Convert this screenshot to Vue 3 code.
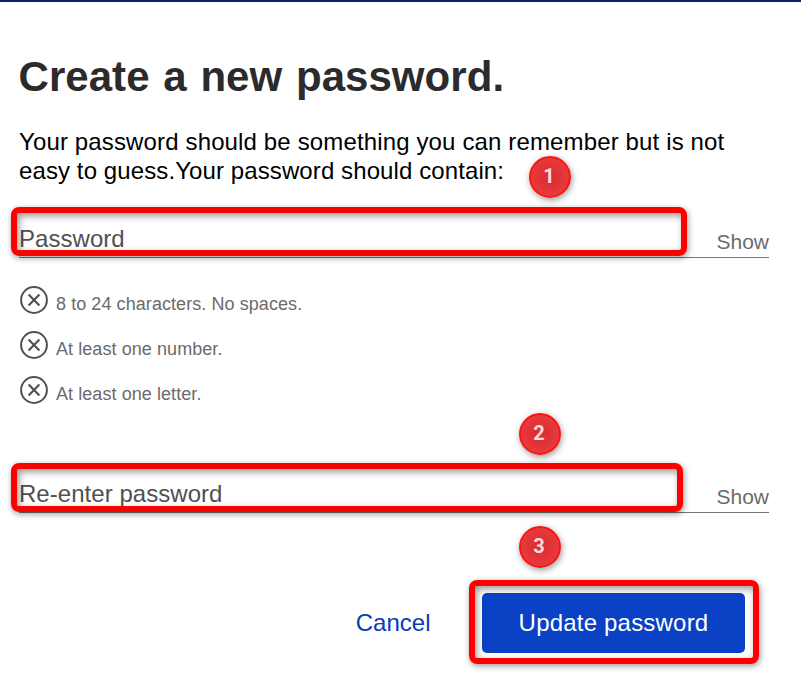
<script setup>
const rules = [
  '8 to 24 characters. No spaces.',
  'At least one number.',
  'At least one letter.',
]
</script>

<template>
  <main class="page">
    <h1 class="title">Create a new password.</h1>
    <p class="intro">
      Your password should be something you can remember but is not<br />easy to guess.Your password should contain:
    </p>

    <div class="field">
      <label class="label">Password</label>
      <span class="show">Show</span>
    </div>

    <ul class="rules">
      <li v-for="rule in rules" :key="rule" class="rule">
        <svg class="icon" viewBox="0 0 28 28" fill="none" stroke="#505050">
          <circle cx="14" cy="14" r="12.9" stroke-width="2" />
          <path d="M8.6 8.6L19.4 19.4M19.4 8.6L8.6 19.4" stroke-width="2.1" />
        </svg>
        <span class="rule-text">{{ rule }}</span>
      </li>
    </ul>

    <div class="field">
      <label class="label">Re-enter password</label>
      <span class="show">Show</span>
    </div>

    <div class="actions">
      <a class="cancel">Cancel</a>
      <button class="update" type="button">Update password</button>
    </div>

    <div class="mark mark-one"></div>
    <div class="mark mark-two"></div>
    <div class="mark mark-three"></div>
    <span class="badge badge-one">1</span>
    <span class="badge badge-two">2</span>
    <span class="badge badge-three">3</span>
  </main>
</template>

<style>
body {
  background: #fff;
}
</style>

<style scoped>
.page {
  position: relative;
  box-sizing: border-box;
  width: 801px;
  height: 673px;
  padding: 51px 32px 0 19px;
  border-top: 2px solid #0a1e73;
  overflow: hidden;
  background: #fff;
  font-family: "Liberation Sans", Arial, sans-serif;
  color: #000;
}
.title {
  margin: 0 0 0 -0.5px;
  font-size: 42px;
  line-height: 48px;
  font-weight: 700;
  letter-spacing: 0.05px;
  word-spacing: 2px;
  white-space: nowrap;
  color: #2b2b2b;
}
.intro {
  margin: 26px 0 0;
  font-size: 24px;
  line-height: 29px;
  letter-spacing: 0.1px;
  white-space: nowrap;
}
.intro::first-line {
  letter-spacing: 0.14px;
}
.field {
  display: flex;
  justify-content: space-between;
  align-items: flex-end;
  box-sizing: border-box;
  height: 58px;
  margin-top: 15px;
  border-bottom: 1px solid #757575;
}
.label {
  font-size: 24px;
  line-height: 28px;
  padding-bottom: 4px;
  letter-spacing: 0.04px;
  color: #505050;
}
.show {
  font-size: 21px;
  line-height: 24px;
  padding-bottom: 3px;
  color: #6b6b6b;
}
.rules {
  display: flex;
  flex-direction: column;
  gap: 17px;
  margin: 28px 0 0;
  padding: 0 0 0 1px;
  list-style: none;
}
.rule {
  display: flex;
  align-items: flex-start;
  gap: 8px;
  height: 28px;
}
.icon {
  width: 28px;
  height: 28px;
}
.rule-text {
  padding-top: 8px;
  font-size: 18px;
  line-height: 20px;
  letter-spacing: 0.07px;
  color: #6b6b6b;
}
.rules + .field {
  margin-top: 51px;
}
.actions {
  display: flex;
  justify-content: flex-end;
  align-items: center;
  gap: 51.5px;
  padding: 80px 24px 0 0;
}
.cancel {
  font-size: 24px;
  line-height: 28px;
  color: #0a3bb5;
}
.update {
  width: 263px;
  height: 60px;
  padding: 0;
  border: 0;
  border-radius: 5px;
  background: #0a41c5;
  color: #fff;
  font: 24px/28px "Liberation Sans", Arial, sans-serif;
  letter-spacing: 0.2px;
}
.mark {
  position: absolute;
  box-sizing: border-box;
  border: 6px solid #f00;
  border-radius: 8px;
  box-shadow: 1px 2px 6px rgba(0, 0, 0, 0.4), inset 2px 3px 7px rgba(0, 0, 0, 0.4);
}
.mark-one {
  left: 11px;
  top: 205px;
  width: 676px;
  height: 49px;
}
.mark-two {
  left: 11px;
  top: 461px;
  width: 672px;
  height: 49px;
}
.mark-three {
  left: 469px;
  top: 578px;
  width: 290px;
  height: 84px;
}
.badge {
  position: absolute;
  box-sizing: border-box;
  width: 42px;
  height: 42px;
  padding-right: 2px;
  border: 2px solid #fb1414;
  border-radius: 50%;
  background: radial-gradient(circle, #dd3036 25%, #e83a3a 70%);
  box-shadow: 1px 2px 6px rgba(0, 0, 0, 0.4);
  color: #fbdcdc;
  font: 700 20px/37px Roboto, sans-serif;
  text-align: center;
}
.badge-one {
  left: 529px;
  top: 154px;
}
.badge-two {
  left: 519px;
  top: 411px;
}
.badge-three {
  left: 519px;
  top: 524px;
}
</style>
